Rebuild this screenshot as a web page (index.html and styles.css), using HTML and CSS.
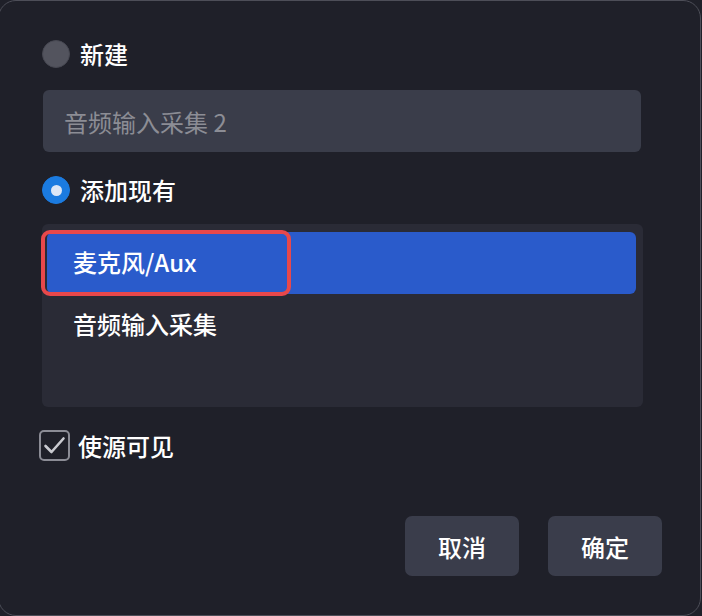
FILE: index.html
```html
<!DOCTYPE html>
<html lang="zh-CN">
<head>
<meta charset="utf-8">
<link rel="stylesheet" href="styles.css">
</head>
<body>
<div class="frame">
  <div class="content">
    <label class="radio-row">
      <span class="radio"></span>
      <span class="label">新建</span>
    </label>
    <div class="input"><span class="placeholder">音频输入采集 2</span></div>
    <label class="radio-row second">
      <span class="radio checked"><span class="dot"></span></span>
      <span class="label">添加现有</span>
    </label>
    <div class="list">
      <div class="item selected">
        <span class="item-text">麦克风/Aux</span>
        <span class="focus-ring"></span>
      </div>
      <div class="item"><span class="item-text">音频输入采集</span></div>
    </div>
    <label class="check-row">
      <span class="checkbox">
        <svg viewBox="0 0 27 27" width="27" height="27"><path d="M4.5 14 L10.5 20 L22.5 6.5" fill="none" stroke="#c9cad0" stroke-width="2.6" stroke-linecap="round" stroke-linejoin="round"/></svg>
      </span>
      <span class="label">使源可见</span>
    </label>
    <div class="buttons">
      <button class="btn">取消</button>
      <button class="btn">确定</button>
    </div>
  </div>
</div>
</body>
</html>
```

FILE: styles.css
```css
html, body {
  margin: 0;
  padding: 0;
  background: #1f2029;
}
body {
  width: 702px;
  height: 616px;
  overflow: hidden;
  font-family: "Noto Sans CJK SC", "Noto Sans", sans-serif;
  color: #ffffff;
}
.frame {
  box-sizing: border-box;
  width: 703px;
  height: 616px;
  margin-left: -2px;
  border: 1px solid #4d4e58;
  border-radius: 18px;
  background: #1f2029;
}
.content {
  display: flex;
  flex-direction: column;
  padding: 39px 0 0 43px;
}
.radio-row {
  display: flex;
  align-items: center;
  height: 28px;
  gap: 10px;
}
.radio-row.second {
  margin-top: 24px;
}
.radio {
  box-sizing: border-box;
  width: 28px;
  height: 28px;
  border-radius: 50%;
  background: #53545e;
  border: 1px solid #474852;
  display: flex;
  align-items: center;
  justify-content: center;
}
.radio.checked {
  background: #1b7be0;
  border-color: #1b7be0;
}
.dot {
  width: 11px;
  height: 11px;
  border-radius: 50%;
  background: #dde7f6;
}
.label {
  font-size: 24px;
  font-weight: 500;
  line-height: 28px;
  color: #ffffff;
}
.input {
  box-sizing: border-box;
  margin-top: 22px;
  margin-left: 1px;
  width: 598px;
  height: 62px;
  background: #3a3d4a;
  border-radius: 6px;
  display: flex;
  align-items: center;
  padding-left: 21px;
}
.placeholder {
  font-size: 24px;
  color: #8c8d95;
}
.list {
  box-sizing: border-box;
  margin-top: 20px;
  width: 601px;
  height: 183px;
  background: #2a2b36;
  border-radius: 6px;
  padding: 8px 7px 0 5px;
  display: flex;
  flex-direction: column;
}
.item {
  position: relative;
  height: 62px;
  display: flex;
  align-items: center;
  padding-left: 26px;
  border-radius: 6px;
}
.item.selected {
  background: #2a5bcb;
}
.item-text {
  font-size: 24px;
  font-weight: 500;
  color: #ffffff;
  margin-top: -3px;
}
.focus-ring {
  position: absolute;
  left: -6px;
  top: -2px;
  width: 250px;
  height: 66px;
  box-sizing: border-box;
  border: 4px solid #e8484b;
  border-radius: 9px;
}
.check-row {
  display: flex;
  align-items: center;
  gap: 8px;
  margin-top: 23px;
  margin-left: -3px;
  height: 31px;
}
.checkbox {
  box-sizing: border-box;
  width: 31px;
  height: 31px;
  border: 2px solid #8b8c95;
  border-radius: 5px;
  display: flex;
  align-items: center;
  justify-content: center;
}
.checkbox svg {
  display: block;
}
.buttons {
  display: flex;
  justify-content: flex-end;
  gap: 29px;
  margin-top: 55px;
  padding-right: 38px;
}
.btn {
  width: 114px;
  height: 60px;
  border: none;
  border-radius: 7px;
  background: #3a3d4b;
  color: #ffffff;
  font-family: "Noto Sans CJK SC", "Noto Sans", sans-serif;
  font-size: 24px;
  font-weight: 500;
  padding: 0;
}
```
